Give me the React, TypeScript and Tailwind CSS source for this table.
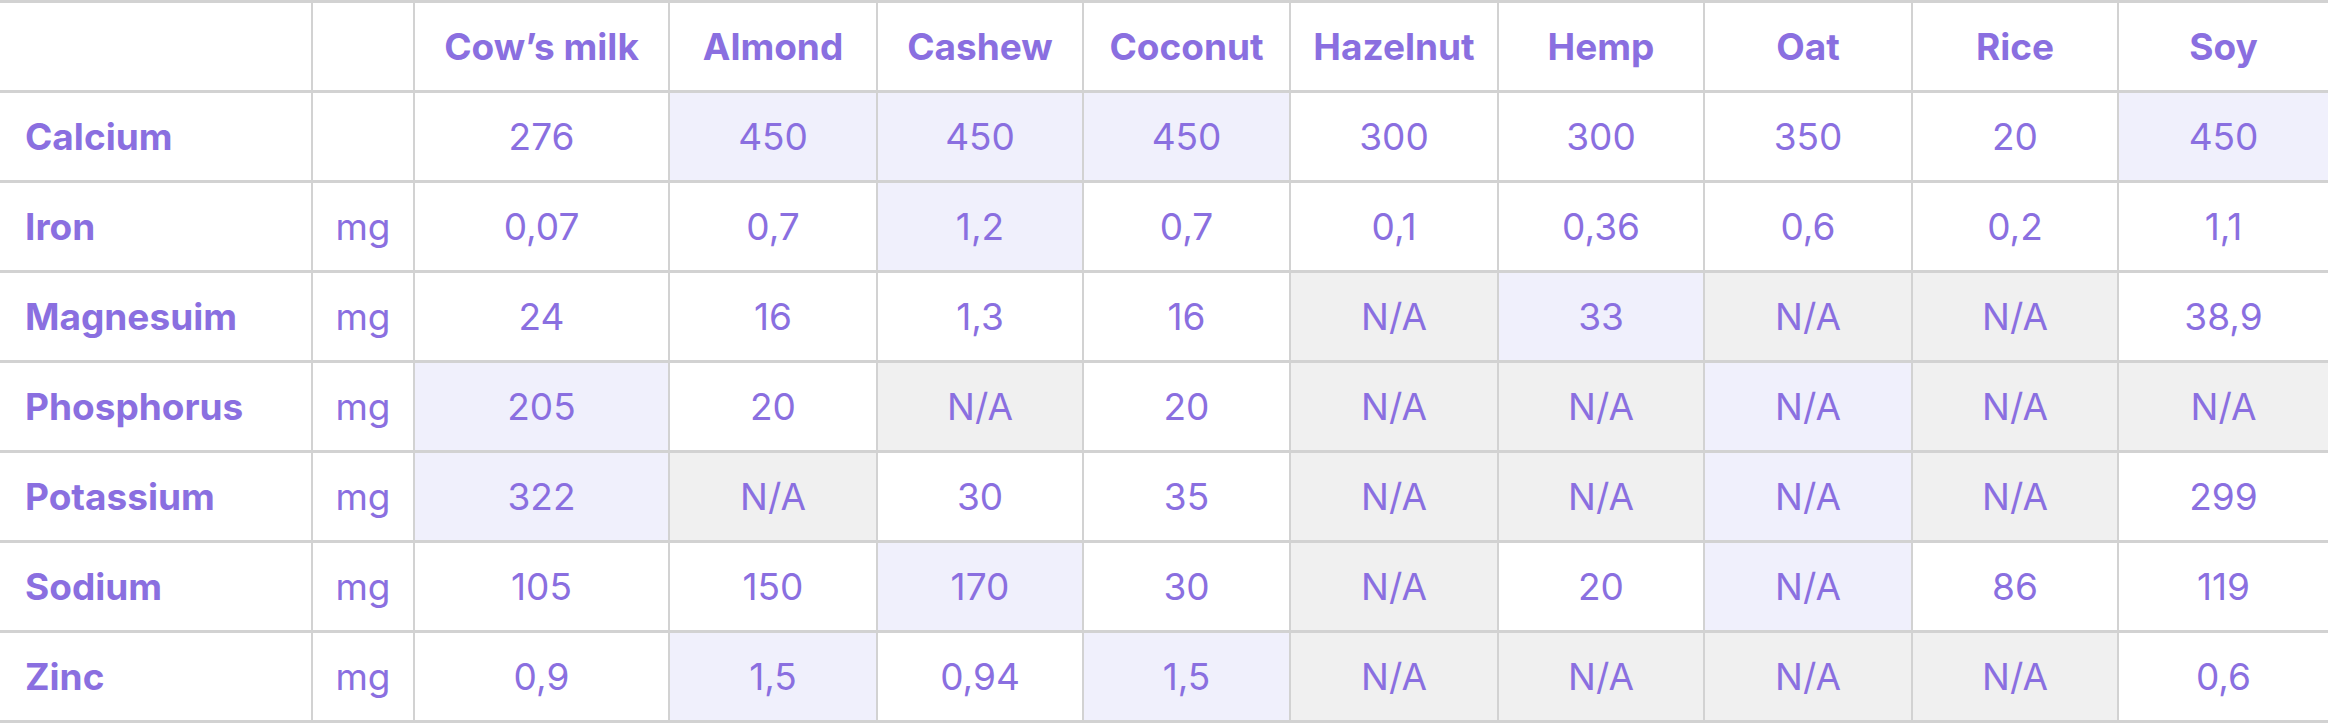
type Tone = 'w' | 'l' | 'g';

interface Row {
  name: string;
  unit: string;
  values: [string, Tone][];
}

const columns = ['Cow’s milk', 'Almond', 'Cashew', 'Coconut', 'Hazelnut', 'Hemp', 'Oat', 'Rice', 'Soy'];

const rows: Row[] = [
  {
    name: 'Calcium',
    unit: '',
    values: [['276', 'w'], ['450', 'l'], ['450', 'l'], ['450', 'l'], ['300', 'w'], ['300', 'w'], ['350', 'w'], ['20', 'w'], ['450', 'l']],
  },
  {
    name: 'Iron',
    unit: 'mg',
    values: [['0,07', 'w'], ['0,7', 'w'], ['1,2', 'l'], ['0,7', 'w'], ['0,1', 'w'], ['0,36', 'w'], ['0,6', 'w'], ['0,2', 'w'], ['1,1', 'w']],
  },
  {
    name: 'Magnesuim',
    unit: 'mg',
    values: [['24', 'w'], ['16', 'w'], ['1,3', 'w'], ['16', 'w'], ['N/A', 'g'], ['33', 'l'], ['N/A', 'g'], ['N/A', 'g'], ['38,9', 'w']],
  },
  {
    name: 'Phosphorus',
    unit: 'mg',
    values: [['205', 'l'], ['20', 'w'], ['N/A', 'g'], ['20', 'w'], ['N/A', 'g'], ['N/A', 'g'], ['N/A', 'l'], ['N/A', 'g'], ['N/A', 'g']],
  },
  {
    name: 'Potassium',
    unit: 'mg',
    values: [['322', 'l'], ['N/A', 'g'], ['30', 'w'], ['35', 'w'], ['N/A', 'g'], ['N/A', 'g'], ['N/A', 'l'], ['N/A', 'g'], ['299', 'w']],
  },
  {
    name: 'Sodium',
    unit: 'mg',
    values: [['105', 'w'], ['150', 'w'], ['170', 'l'], ['30', 'w'], ['N/A', 'g'], ['20', 'w'], ['N/A', 'l'], ['86', 'w'], ['119', 'w']],
  },
  {
    name: 'Zinc',
    unit: 'mg',
    values: [['0,9', 'w'], ['1,5', 'l'], ['0,94', 'w'], ['1,5', 'l'], ['N/A', 'g'], ['N/A', 'g'], ['N/A', 'g'], ['N/A', 'g'], ['0,6', 'w']],
  },
];

const toneClass: Record<Tone, string> = {
  w: 'bg-white',
  l: 'bg-[#f0f0fc]',
  g: 'bg-[#f0f0f0]',
};

export default function App() {
  return (
    <div
      className="min-h-screen w-full bg-white text-[#8a6fe0] text-[37px] leading-none"
      style={{ fontFamily: 'Inter, "Noto Sans", sans-serif' }}
    >
      {/* Nutrient table */}
      <div className="grid grid-cols-[311px_100px_253px_206px_204px_205px_206px_204px_206px_204px_1fr] auto-rows-[87px] gap-x-[2px] gap-y-[3px] bg-[#d2d2d2] py-[3px]">
        {/* Header */}
        <div className="bg-white" />
        <div className="bg-white" />
        {columns.map((c) => (
          <div key={c} className="flex items-center justify-center bg-white font-bold">
            {c}
          </div>
        ))}

        {rows.map((r) => (
          <div key={r.name} className="contents">
            <div className="flex items-center bg-white pl-[25px] font-bold">{r.name}</div>
            <div className="flex items-center justify-center bg-white">{r.unit}</div>
            {r.values.map(([v, t], i) => (
              <div key={i} className={`flex items-center justify-center ${toneClass[t]}`}>
                {v}
              </div>
            ))}
          </div>
        ))}
      </div>
    </div>
  );
}
